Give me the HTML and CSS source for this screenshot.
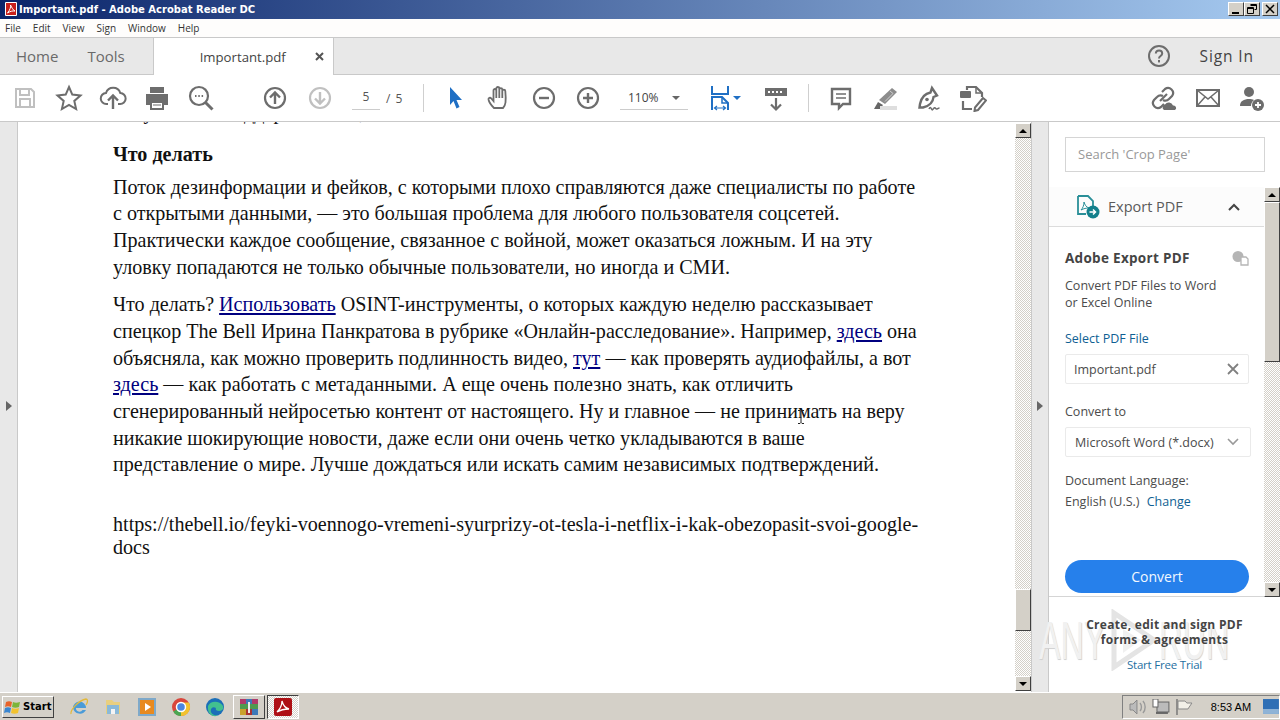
FILE: index.html
```html
<!DOCTYPE html>
<html lang="en">
<head>
    <meta charset="UTF-8">
    <title>Important.pdf - Adobe Acrobat Reader DC</title>
    <link rel="stylesheet" href="styles.css">
</head>
<body>
    <div class="titlebar">
        <svg class="title-icon" width="14" height="14" viewBox="0 0 14 14"><rect x="1" y="0" width="12" height="14" rx="1" fill="#fff"/><rect x="2" y="1" width="10" height="12" fill="#c8201c"/><path d="M3.5 11 C6 8 7 5 6.5 3 C8 6 9 8 11 9 C8.5 8.7 6 9.3 3.5 11Z" fill="none" stroke="#fff" stroke-width="1"/></svg>
        <span class="title-text">Important.pdf - Adobe Acrobat Reader DC</span>
        <div class="win-buttons">
            <button class="win-btn"><svg width="12" height="12" viewBox="0 0 12 12"><rect x="2" y="9" width="7" height="2" fill="#000"/></svg></button>
            <button class="win-btn"><svg width="12" height="12" viewBox="0 0 12 12"><path d="M4.5 1.5h6v5h-2M1.5 4.5h6v6h-6z M4.5 2.5h6 M1.5 5.5h6" fill="none" stroke="#000"/></svg></button>
            <button class="win-btn win-close"><svg width="12" height="12" viewBox="0 0 12 12"><path d="M2 2l8 8M10 2l-8 8" stroke="#000" stroke-width="1.5"/></svg></button>
        </div>
    </div>

    <div class="menubar">
        <span>File</span><span>Edit</span><span>View</span><span>Sign</span><span>Window</span><span>Help</span>
    </div>

    <div class="tabbar">
        <span class="nav-tab">Home</span>
        <span class="nav-tab nav-tools">Tools</span>
        <div class="doc-tab">
            <span>Important.pdf</span>
            <svg class="doc-close" width="9" height="9" viewBox="0 0 9 9"><path d="M1 1l7 7M8 1l-7 7" stroke="#555" stroke-width="2"/></svg>
        </div>
        <svg class="help-icon" width="24" height="24" viewBox="0 0 24 24"><circle cx="12" cy="12" r="10" fill="none" stroke="#6d6d6d" stroke-width="2"/><path d="M8.8 9.5c.2-4 6.4-4 6.4 0 0 2.6-3.2 2.5-3.2 5" fill="none" stroke="#6d6d6d" stroke-width="2"/><rect x="11" y="16" width="2" height="2.4" fill="#6d6d6d"/></svg>
        <span class="sign-in">Sign In</span>
    </div>

    <div class="toolbar">
        <svg class="tool tool-first" viewBox="0 0 28 28"><path d="M5 5h15l3 3v15H5z M9 5v6h9V5 M9 23v-8h10v8" fill="none" stroke="#c0c0c0" stroke-width="2"/></svg>
        <svg class="tool" viewBox="0 0 28 28"><path d="M14 3l3.3 7.6 8.2.8-6.200 5.500 1.800 8.100-7.100-4.200-7.100 4.200 1.800-8.100-6.200-5.500 8.200-.8z" fill="none" stroke="#6d6d6d" stroke-width="2"/></svg>
        <svg class="tool" viewBox="0 0 28 28"><path d="M9 20H7.500a5.500 5.500 0 0 1-.5-11 7.500 7.500 0 0 1 14.300 0 5.500 5.500 0 0 1-.3 11H19" fill="none" stroke="#6d6d6d" stroke-width="2"/><path d="M14 25V12M9 16.500l5-5 5 5" fill="none" stroke="#6d6d6d" stroke-width="2.400"/></svg>
        <svg class="tool" viewBox="0 0 28 28"><path d="M7 3h14v6H7z" fill="#6d6d6d"/><path d="M3 10h22v11h-4v-4H7v4H3z" fill="#6d6d6d"/><path d="M8 18h12v7H8z" fill="#fff" stroke="#6d6d6d" stroke-width="2"/><path d="M10 21h8" stroke="#6d6d6d"/></svg>
        <svg class="tool" viewBox="0 0 28 28"><circle cx="12" cy="12" r="9" fill="none" stroke="#6d6d6d" stroke-width="2.200"/><path d="M18.500 18.500l7 7" stroke="#6d6d6d" stroke-width="3"/><path d="M8 12h1.500M11.300 12h1.500M14.600 12h1.500" stroke="#6d6d6d" stroke-width="2"/></svg>

        <svg class="tool tool-nav" viewBox="0 0 28 28"><circle cx="14" cy="14" r="10" fill="none" stroke="#6d6d6d" stroke-width="2.200"/><path d="M14 20V9M9 13.500l5-5 5 5" fill="none" stroke="#6d6d6d" stroke-width="2.400"/></svg>
        <svg class="tool tool-down" viewBox="0 0 28 28"><circle cx="14" cy="14" r="10" fill="none" stroke="#c0c0c0" stroke-width="2.200"/><path d="M14 8v11M9 14.500l5 5 5-5" fill="none" stroke="#c0c0c0" stroke-width="2.400"/></svg>
        <span class="page-input">5</span>
        <span class="page-total">/ 5</span>
        <span class="tool-sep sep-one"></span>

        <svg class="tool tool-select" viewBox="0 0 28 28"><path d="M8 3l12 13h-5.500l3 7-3 1.500-3-7.500L8 21z" fill="#1f6fc4"/></svg>
        <svg class="tool" viewBox="0 0 28 28"><path d="M8 24c-2-2-5-6-5.500-8.500-.3-1.700 1.700-2.300 2.800-1L7.500 17V6.500c0-2 2.800-2 2.800 0V4.500c0-2 3-2 3 0v1c0-1.800 3-1.800 3 0v1.500c0-1.800 3-1.800 3 0 .5 5 .5 9 .2 11.500-.3 2.500-1.500 4.500-2.500 5.500z M10.300 6v8M13.300 5v9M16.300 6v8" fill="none" stroke="#6d6d6d" stroke-width="1.800"/></svg>
        <svg class="tool" viewBox="0 0 28 28"><circle cx="14" cy="14" r="10" fill="none" stroke="#6d6d6d" stroke-width="2.200"/><path d="M9 14h10" stroke="#6d6d6d" stroke-width="2.400"/></svg>
        <svg class="tool" viewBox="0 0 28 28"><circle cx="14" cy="14" r="10" fill="none" stroke="#6d6d6d" stroke-width="2.200"/><path d="M9 14h10M14 9v10" stroke="#6d6d6d" stroke-width="2.400"/></svg>

        <div class="zoom-select"><span>110%</span><i class="caret"></i></div>

        <svg class="tool tool-fit" viewBox="0 0 28 28"><path d="M5 2v8h16V2" fill="none" stroke="#1f6fc4" stroke-width="2"/><path d="M5 26V13h10l6 6v7" fill="none" stroke="#1f6fc4" stroke-width="2"/><path d="M15 13v6h6" fill="none" stroke="#1f6fc4" stroke-width="1.500"/><path d="M8 24h10M10 22l-2.500 2 2.500 2M16 22l2.500 2-2.500 2" fill="none" stroke="#1f6fc4" stroke-width="1.200"/></svg>
        <i class="caret caret-blue"></i>
        <svg class="tool tool-ruler" viewBox="0 0 28 28"><rect x="3" y="4" width="22" height="8" fill="#6d6d6d"/><path d="M6 8h2M10 8h2M14 8h2M18 8h2" stroke="#fff" stroke-width="2"/><path d="M14 14v11M9 20.500l5 5 5-5" fill="none" stroke="#6d6d6d" stroke-width="2.200"/></svg>
        <span class="tool-sep sep-two"></span>

        <svg class="tool tool-comment" viewBox="0 0 28 28"><path d="M5 5h18v15h-7l-4 4v-4H5z" fill="none" stroke="#6d6d6d" stroke-width="2.400"/><path d="M9 10h10M9 14h10" stroke="#6d6d6d" stroke-width="1.400"/></svg>
        <svg class="tool" viewBox="0 0 28 28"><path d="M21 4l5 4-12 12-6-4z" fill="#8c8c8c"/><path d="M19 7l3 2.500-8 8" fill="none" stroke="#d0d0d0"/><path d="M3 25l4-7 5 3-3 4z" fill="#666"/><rect x="9" y="22" width="17" height="4" fill="#dedede"/></svg>
        <svg class="tool" viewBox="0 0 28 28"><path d="M17 4l-1.500 4.500C10 9.500 6.500 13 5 20l-.5 3.500H8c6.500-1.500 10-5 10.500-10.500L22 11.500z" fill="none" stroke="#6d6d6d" stroke-width="2.400"/><circle cx="12" cy="15.500" r="1.800" fill="#6d6d6d"/><path d="M14 25c1-2 1.500-2 2.500 0s1.500 0 2.500-1 1.500 1 2.500 1 1.500-1 3-1" fill="none" stroke="#6d6d6d" stroke-width="1.600"/></svg>
        <svg class="tool" viewBox="0 0 28 28"><path d="M8 6V3h9l6 6v4M4 17v8h9" fill="none" stroke="#6d6d6d" stroke-width="2.200"/><rect x="1" y="7" width="11" height="7" rx="1" fill="#6d6d6d"/><path d="M17 3v6h6" fill="none" stroke="#6d6d6d" stroke-width="1.500"/><path d="M24 14l3 2.500-8 9.500-3.500 1 .5-3.500z" fill="none" stroke="#6d6d6d" stroke-width="2"/></svg>

        <svg class="tool tool-link" viewBox="0 0 28 28"><path d="M12 8l3-3a5 5 0 0 1 7 7l-3 3a5 5 0 0 1-6 1M14 20l-3 3a5 5 0 0 1-7-7l3-3a5 5 0 0 1 6-1" fill="none" stroke="#6d6d6d" stroke-width="2.200"/><path d="M10 17l7-7" stroke="#6d6d6d" stroke-width="2.200"/><path d="M14 26a3 3 0 0 1 1-5.500 4.500 4.500 0 0 1 8 1 2.500 2.500 0 0 1 2 4.500z" fill="#6d6d6d"/></svg>
        <svg class="tool" viewBox="0 0 28 28"><rect x="3" y="6" width="22" height="16" fill="none" stroke="#6d6d6d" stroke-width="2"/><path d="M3 6l11 9 11-9M3 22l8-9M25 22l-8-9" fill="none" stroke="#6d6d6d" stroke-width="1.500"/></svg>
        <svg class="tool" viewBox="0 0 28 28"><circle cx="11" cy="8" r="5" fill="#6d6d6d"/><path d="M2 22c0-5 4-7 9-7 2 0 3.500.300 5 1-2 1.500-3 3.500-3 6z" fill="#6d6d6d"/><circle cx="20" cy="21" r="6" fill="#6d6d6d"/><path d="M17 21h6M20 18v6" stroke="#fff" stroke-width="1.800"/></svg>
    </div>

    <div class="workspace">
        <div class="left-strip"><i class="arrow-right"></i></div>

        <div class="document">
            <div class="doc-body">
                <p class="cut-line">получили от поддержки чата,</p>
                <h3 class="doc-heading">Что делать</h3>
                <p class="doc-para">Поток дезинформации и фейков, с которыми плохо справляются даже специалисты по работе<br>
                с открытыми данными, — это большая проблема для любого пользователя соцсетей.<br>
                Практически каждое сообщение, связанное с войной, может оказаться ложным. И на эту<br>
                уловку попадаются не только обычные пользователи, но иногда и СМИ.</p>
                <p class="doc-para">Что делать? <a href="#">Использовать</a> OSINT-инструменты, о которых каждую неделю рассказывает<br>
                спецкор The Bell Ирина Панкратова в рубрике «Онлайн-расследование». Например, <a href="#">здесь</a> она<br>
                объясняла, как можно проверить подлинность видео, <a href="#">тут</a> — как проверять аудиофайлы, а вот<br>
                <a href="#">здесь</a> — как работать с метаданными. А еще очень полезно знать, как отличить<br>
                сгенерированный нейросетью контент от настоящего. Ну и главное — не принимать на веру<br>
                никакие шокирующие новости, даже если они очень четко укладываются в ваше<br>
                представление о мире. Лучше дождаться или искать самим независимых подтверждений.</p>
                <p class="doc-url">https://thebell.io/feyki-voennogo-vremeni-syurprizy-ot-tesla-i-netflix-i-kak-obezopasit-svoi-google-<br>docs</p>
            </div>
            <svg class="text-cursor" width="8" height="14" viewBox="0 0 8 14"><path d="M1 .5h2l1 1 1-1h2M4 1.500v11M1 13.500h2l1-1 1 1h2" fill="none" stroke="#222"/></svg>
        </div>

        <div class="scrollbar doc-scroll">
            <button class="scroll-btn"><i class="tri-up"></i></button>
            <div class="scroll-track doc-track"><div class="scroll-thumb doc-thumb"></div></div>
            <button class="scroll-btn"><i class="tri-down"></i></button>
        </div>

        <div class="right-strip"><i class="arrow-right"></i></div>

        <aside class="side">
            <div class="search-box">Search 'Crop Page'</div>
            <div class="side-middle">
                <div class="export-col">
                    <div class="export-head">
                        <svg width="24" height="24" viewBox="0 0 24 24"><path d="M2 1h10l5 5v5M2 1v18h8" fill="none" stroke="#2a8f98" stroke-width="1.800"/><path d="M5 15c2-2 3-5 3-8 1 3 2 5 5 6-3 0-5 .5-8 2z" fill="none" stroke="#2a8f98"/><circle cx="17" cy="17" r="6.500" fill="#13808c"/><path d="M13.500 17h6M17 14.500l2.500 2.500-2.500 2.500" fill="none" stroke="#fff" stroke-width="1.500"/></svg>
                        <span class="export-title">Export PDF</span>
                        <svg class="chevron-up" width="12" height="8" viewBox="0 0 12 8"><path d="M1 7l5-5 5 5" fill="none" stroke="#444" stroke-width="2"/></svg>
                    </div>
                    <div class="export-body">
                        <div class="export-name">
                            <strong>Adobe Export PDF</strong>
                            <svg width="17" height="16" viewBox="0 0 17 16"><circle cx="6" cy="6.500" r="5.500" fill="#b5b5b5"/><path d="M9 7h5l2 2v6H9z" fill="#fff" stroke="#b5b5b5" stroke-width="1.300"/></svg>
                        </div>
                        <p class="export-desc">Convert PDF Files to Word<br>or Excel Online</p>
                        <a class="side-link select-link" href="#">Select PDF File</a>
                        <div class="field file-field">
                            <span>Important.pdf</span>
                            <svg width="12" height="12" viewBox="0 0 12 12"><path d="M1 1l10 10M11 1L1 11" stroke="#808080" stroke-width="1.800"/></svg>
                        </div>
                        <p class="convert-label">Convert to</p>
                        <div class="field format-field">
                            <span>Microsoft Word (*.docx)</span>
                            <svg width="12" height="8" viewBox="0 0 12 8"><path d="M1 1l5 5 5-5" fill="none" stroke="#999" stroke-width="1.600"/></svg>
                        </div>
                        <p class="lang-label">Document Language:</p>
                        <p class="lang-value">English (U.S.) <a class="side-link change-link" href="#">Change</a></p>
                        <button class="convert-btn">Convert</button>
                    </div>
                </div>
                <div class="scrollbar side-scroll">
                    <button class="scroll-btn"><i class="tri-up"></i></button>
                    <div class="scroll-track side-track"><div class="scroll-thumb side-thumb"></div></div>
                    <button class="scroll-btn"><i class="tri-down"></i></button>
                </div>
            </div>
            <div class="promo">
                <p class="promo-text">Create, edit and sign PDF<br>forms &amp; agreements</p>
                <a class="promo-link" href="#">Start Free Trial</a>
            </div>
        </aside>

        <div class="watermark">
            <span class="wm-word">ANY</span>
            <svg width="50" height="62" viewBox="0 0 50 62"><path d="M5 4l40 27L5 58z" fill="none" stroke="#e4e4e4" stroke-width="5"/><path d="M14 20l18 11-18 13z" fill="#f0f0f0"/></svg>
            <span class="wm-word">RUN</span>
        </div>
    </div>

    <div class="taskbar">
        <button class="start-btn">
            <svg width="18" height="16" viewBox="0 0 18 16"><path d="M2 3c2-1 4-1 6 0L7 8C5 7 3 7 1 8z" fill="#e8632a"/><path d="M9 3c2 1 4 1 7 0l-1 5c-2 1-5 1-7 0z" fill="#7cb53a"/><path d="M1 9c2-1 4-1 6 0l-1 5c-2-1-4-1-6 0z" fill="#3a86d0"/><path d="M8 9c2 1 5 1 7 0l-1 5c-2 1-5 1-7 0z" fill="#f2c22e"/></svg>
            <span>Start</span>
        </button>
        <div class="quick">
            <svg width="20" height="20" viewBox="0 0 20 20"><path d="M4 11a6.500 6.500 0 0 1 13 0H7a3.500 3.500 0 0 0 6.500 2H17a7 7 0 0 1-13-2z" fill="#4a9bd8"/><path d="M2 17C1 13 10 3 17 2c2 0 2 3 0 6" fill="none" stroke="#e3b93a" stroke-width="1.300"/></svg>
            <svg width="20" height="20" viewBox="0 0 20 20"><path d="M3 3h6l2 2h6v12H3z" fill="#e9cf7e"/><rect x="4" y="8" width="12" height="9" fill="#8ab9d8"/><rect x="8" y="12" width="4" height="5" fill="#f4f4f4"/></svg>
            <svg width="20" height="20" viewBox="0 0 20 20"><rect x="2" y="2" width="16" height="16" fill="#e88a1f" stroke="#7fa9c9" stroke-width="2"/><path d="M8 6l6 4-6 4z" fill="#fff"/></svg>
            <svg width="20" height="20" viewBox="0 0 20 20"><circle cx="10" cy="10" r="9" fill="#d9473c"/><path d="M10 10L2.200 14.500A9 9 0 0 0 10 19z" fill="#4aa652"/><path d="M10 10v9a9 9 0 0 0 7.800-13.500H10z" fill="#f2c22e"/><circle cx="10" cy="10" r="4.500" fill="#4a86e0" stroke="#fff" stroke-width="1.500"/></svg>
            <svg width="20" height="20" viewBox="0 0 20 20"><circle cx="10" cy="10" r="9" fill="#1b6fb8"/><path d="M3 9c2-5 11-6 15 0 1 3-1 5-4 5-2 0-4-1-3-3-3-2-6 0-5 4 1 3 5 4 8 3-5 3-12 0-11-9z" fill="#42c08f"/></svg>
            <div class="task-app"><svg width="20" height="20" viewBox="0 0 20 20"><rect x="1" y="2" width="6" height="5" fill="#b03a6a"/><rect x="7" y="2" width="6" height="5" fill="#3e79b8"/><rect x="13" y="2" width="6" height="5" fill="#b03a6a"/><rect x="1" y="7" width="18" height="5" fill="#4f9a4f"/><rect x="1" y="12" width="6" height="6" fill="#c9a12c"/><rect x="7" y="12" width="6" height="6" fill="#a33"/><rect x="13" y="12" width="6" height="6" fill="#3e79b8"/><rect x="9" y="5" width="2" height="11" fill="#eee"/></svg></div>
            <div class="task-app task-active"><svg width="20" height="20" viewBox="0 0 20 20"><rect x="1" y="1" width="18" height="18" rx="2" fill="#ae1015"/><path d="M4 15c3-3 5-7 5-11 1 4 3 7 7 8-4 0-8 .6-12 3z" fill="none" stroke="#fff" stroke-width="1.300"/></svg></div>
        </div>
        <div class="tray">
            <svg width="18" height="16" viewBox="0 0 18 16"><path d="M1 5h3l4-4v14l-4-4H1z" fill="#bbb" stroke="#888"/><path d="M11 4c2 2 2 6 0 8M14 2c3 3 3 9 0 12" fill="none" stroke="#999" stroke-width="1.400"/></svg>
            <svg width="18" height="16" viewBox="0 0 18 16"><rect x="5" y="3" width="12" height="10" fill="#bbb" stroke="#666"/><rect x="1" y="0" width="5" height="8" fill="#fff" stroke="#666"/><path d="M4 14h12" stroke="#666" stroke-width="2"/></svg>
            <svg width="18" height="16" viewBox="0 0 18 16"><path d="M2 0v16" stroke="#777" stroke-width="1.500"/><path d="M3 2h7l2 2h5l-4 6H3z" fill="#f2f0e8" stroke="#888"/></svg>
            <span class="clock">8:53 AM</span>
            <svg class="show-desktop" width="16" height="15" viewBox="0 0 16 15"><rect width="16" height="15" fill="#2f6fb5"/><rect y="10" width="16" height="5" fill="#8fb3d6"/></svg>
        </div>
    </div>
</body>
</html>
```

FILE: styles.css
```css
* {
    box-sizing: border-box;
}

html, body {
    margin: 0;
    padding: 0;
    width: 1280px;
    height: 720px;
    overflow: hidden;
}

body {
    display: flex;
    flex-direction: column;
    background-color: #fff;
    font-family: "Open Sans", sans-serif;
}

p, h3 {
    margin: 0;
}

button {
    font-family: inherit;
    padding: 0;
}

/* title bar */
.titlebar {
    height: 19px;
    display: flex;
    align-items: center;
    padding: 0 2px 1px 4px;
    background: linear-gradient(to right, #0a246a, #a6caf0);
}

.title-icon {
    margin-right: 1px;
}

.title-text {
    color: #fff;
    font-family: "DejaVu Sans", sans-serif;
    font-weight: bold;
    font-size: 10px;
}

.win-buttons {
    margin-left: auto;
    display: flex;
}

.win-btn {
    width: 16px;
    height: 14px;
    display: flex;
    align-items: center;
    justify-content: center;
    background-color: #d4d0c8;
    border: 1px solid;
    border-color: #fff #404040 #404040 #fff;
}

.win-close {
    margin-left: 2px;
}

/* menu */
.menubar {
    height: 19px;
    display: flex;
    align-items: center;
    gap: 12px;
    padding-left: 5px;
    background-color: #fefdfc;
    border-bottom: 1px solid #c9c9c9;
    font-family: "Open Sans", sans-serif;
    font-size: 10px;
    color: #333;
}

/* tabs */
.tabbar {
    height: 37px;
    display: flex;
    align-items: center;
    background-color: #e8e8e8;
    border-bottom: 1px solid #c9c9c9;
    color: #6a6a6a;
}

.nav-tab {
    font-size: 15px;
    margin-left: 16px;
}

.nav-tools {
    margin-left: 29px;
}

.doc-tab {
    width: 181px;
    height: 37px;
    margin-left: 28px;
    margin-bottom: -1px;
    padding-left: 46px;
    display: flex;
    align-items: center;
    background-color: #fff;
    border-right: 1px solid #c9c9c9;
    border-left: 1px solid #c9c9c9;
    font-size: 13.200px;
    color: #444;
}

.doc-close {
    margin-left: 29px;
}

.help-icon {
    margin-left: auto;
}

.sign-in {
    margin: 0 26px 0 29px;
    font-size: 15.500px;
    letter-spacing: 0.9px;
    color: #444;
}

/* toolbar */
.toolbar {
    height: 47px;
    display: flex;
    align-items: center;
    gap: 16px;
    padding-left: 11px;
    background-color: #fff;
    border-bottom: 1px solid #c9c9c9;
}

.tool {
    width: 28px;
    height: 28px;
    flex: none;
}

.tool-nav {
    margin-left: 30px;
}

.tool-down {
    margin-left: 1px;
}

.page-input {
    width: 28px;
    height: 24px;
    margin-left: 2px;
    line-height: 22px;
    text-align: center;
    border-bottom: 1px solid #ccc;
    font-size: 12px;
    color: #555;
}

.page-total {
    margin-left: -10px;
    width: 20px;
    font-size: 12px;
    letter-spacing: 1px;
    white-space: nowrap;
    color: #555;
}

.tool-sep {
    width: 1px;
    height: 28px;
    background-color: #cfcfcf;
    flex: none;
}

.sep-one {
    margin-left: 1px;
}

.sep-two {
    margin-left: 2px;
}

.tool-select {
    margin-left: 2px;
}

.zoom-select {
    width: 68px;
    height: 24px;
    margin-left: 2px;
    padding: 0 8px;
    display: flex;
    align-items: center;
    justify-content: space-between;
    border-bottom: 1px solid #ccc;
    font-size: 12px;
    color: #444;
}

.caret {
    width: 0;
    height: 0;
    border-style: solid;
    border-width: 4px 4px 0;
    border-color: #666 transparent transparent;
}

.caret-blue {
    margin-left: -18px;
    border-color: #1f6fc4 transparent transparent;
}

.tool-fit {
    margin-left: 3px;
}

.tool-ruler {
    margin-left: 5px;
}

.tool-comment {
    margin-left: 2px;
}

.tool-link {
    margin-left: 147px;
}

/* main area */
.workspace {
    position: relative;
    flex: 1;
    min-height: 0;
    display: flex;
}

.left-strip, .right-strip {
    width: 18px;
    display: flex;
    align-items: center;
    justify-content: center;
    background-color: #e8e8e8;
    border-right: 1px solid #c9c9c9;
}

.left-strip {
    padding-bottom: 2px;
}

.right-strip {
    padding-bottom: 2px;
    border-left: 1px solid #c9c9c9;
}

.arrow-right {
    width: 0;
    height: 0;
    border-style: solid;
    border-width: 5px 0 5px 6px;
    border-color: transparent transparent transparent #666;
}

.document {
    position: relative;
    width: 997px;
    overflow: hidden;
    background-color: #fff;
}

.doc-body {
    padding-left: 95px;
    font-family: "Liberation Serif", serif;
    font-size: 20.100px;
    line-height: 26.670px;
    color: #111;
}

.cut-line {
    margin-top: -23px;
    height: 22px;
}

.doc-heading {
    margin-top: 19.500px;
    font-size: 20.100px;
    line-height: 26px;
}

.doc-para {
    margin-top: 7px;
    margin-bottom: 11px;
}

.doc-para a {
    color: #000080;
}

.doc-url {
    margin-top: 35px;
    line-height: 23px;
}

.text-cursor {
    position: absolute;
    left: 779px;
    top: 288px;
}

/* scrollbars */
.scrollbar {
    width: 16px;
    display: flex;
    flex-direction: column;
    flex: none;
}

.scroll-btn {
    height: 15px;
    flex: none;
    display: flex;
    align-items: center;
    justify-content: center;
    background-color: #d4d0c8;
    border: 1px solid;
    border-color: #fff #404040 #404040 #fff;
}

.scroll-track {
    flex: 1;
    display: flex;
    flex-direction: column;
    background: repeating-conic-gradient(#d4d0c8 0 25%, #fff 0 50%) 0 0 / 2px 2px;
}

.scroll-thumb {
    background-color: #d4d0c8;
    border: 1px solid;
    border-color: #fff #404040 #404040 #fff;
}

.doc-thumb {
    height: 42px;
    margin-top: 451px;
}

.side-thumb {
    height: 160px;
}

.tri-up, .tri-down {
    width: 0;
    height: 0;
    border-style: solid;
}

.tri-up {
    border-width: 0 4px 4px;
    border-color: transparent transparent #000;
}

.tri-down {
    border-width: 4px 4px 0;
    border-color: #000 transparent transparent;
}

.doc-scroll {
    padding-top: 1px;
    padding-bottom: 1px;
}

/* right panel */
.side {
    position: relative;
    width: 231px;
    display: flex;
    flex-direction: column;
    background-color: #fff;
    color: #4b4b4b;
}

.search-box {
    width: 200px;
    height: 35px;
    margin: 15px 0 15px 16px;
    padding-left: 12px;
    line-height: 33px;
    border: 1px solid #d5d5d5;
    font-size: 13px;
    color: #999;
}

.side-middle {
    height: 410px;
    display: flex;
    justify-content: space-between;
}

.export-col {
    width: 215px;
    border-bottom: 1px solid #d5d5d5;
}

.export-head {
    height: 40px;
    padding-left: 27px;
    display: flex;
    align-items: center;
    border-bottom: 1px solid #dcdcdc;
    background-color: #fcfcfc;
}

.export-title {
    margin-left: 8px;
    font-size: 14.500px;
    color: #5a5a5a;
}

.chevron-up {
    margin-left: 45px;
}

.export-body {
    padding: 0 15px 0 16px;
    font-size: 12.500px;
}

.export-name {
    margin-top: 22px;
    display: flex;
    align-items: center;
    justify-content: space-between;
}

.export-name strong {
    font-size: 13.500px;
    letter-spacing: 0.3px;
    color: #444;
}

.export-desc {
    margin-top: 10px;
    line-height: 17px;
}

.side-link {
    color: #0f5f94;
    text-decoration: none;
}

.select-link {
    display: block;
    margin-top: 19px;
}

.field {
    height: 30px;
    display: flex;
    align-items: center;
    justify-content: space-between;
    padding: 0 9px 0 8px;
    background-color: #fff;
    border: 1px solid #eaeaea;
    border-radius: 2px;
    font-size: 12.500px;
}

.file-field {
    margin-top: 7px;
}

.convert-label {
    margin-top: 19px;
}

.format-field {
    margin-top: 7px;
    margin-right: -2px;
    padding-left: 9px;
    padding-right: 11px;
}

.lang-label {
    margin-top: 15px;
}

.lang-value {
    margin-top: 4px;
    line-height: 17px;
}

.change-link {
    margin-left: 4px;
}

.convert-btn {
    display: block;
    width: 184px;
    height: 33px;
    margin-top: 50px;
    border: none;
    border-radius: 17px;
    background-color: #2680eb;
    color: #f2f8ff;
    font-size: 14px;
}

.promo {
    position: relative;
    z-index: 2;
    text-align: center;
    padding: 20px 0 0 0;
}

.promo-text {
    font-size: 12px;
    line-height: 15px;
    font-weight: 700;
    letter-spacing: 0.3px;
    color: #444;
    text-shadow: 0 0 2px #fff;
}

.promo-link {
    display: block;
    margin-top: 10px;
    font-size: 11.500px;
    letter-spacing: -0.2px;
    color: #1f6f9f;
    text-decoration: none;
    text-shadow: 0 0 2px #fff;
}

/* watermark sits over the strip and the panel */
.watermark {
    position: absolute;
    left: 1039px;
    top: 487px;
    z-index: 1;
    display: flex;
    align-items: center;
    font-family: "Liberation Sans", sans-serif;
    font-size: 54px;
    color: #f1f1f1;
    text-shadow: 1px 1px 1px #d0d0d0;
    pointer-events: none;
}

.wm-word {
    width: 70px;
    transform: scaleX(0.6);
    transform-origin: left center;
}

/* taskbar */
.taskbar {
    height: 28px;
    display: flex;
    align-items: center;
    background-color: #d4d0c8;
    border-top: 1px solid #fff;
    box-shadow: inset 0 1px 0 #d4d0c8;
}

.start-btn {
    width: 52px;
    height: 22px;
    margin-left: 2px;
    display: flex;
    align-items: center;
    gap: 1px;
    padding-left: 1px;
    background-color: #d4d0c8;
    border: 1px solid;
    border-color: #fff #404040 #404040 #fff;
    font-family: "DejaVu Sans", sans-serif;
    font-weight: bold;
    font-size: 10px;
    color: #000;
}

.quick {
    display: flex;
    align-items: center;
    gap: 14px;
    margin-left: 15px;
}

.task-app {
    width: 32px;
    height: 24px;
    margin: 0 -6px;
    display: flex;
    align-items: center;
    justify-content: center;
    border: 1px solid;
    border-color: #fff #404040 #404040 #fff;
}

.task-active {
    background: repeating-conic-gradient(#d4d0c8 0 25%, #fff 0 50%) 0 0 / 2px 2px;
    border-color: #404040 #fff #fff #404040;
}

.tray {
    margin-left: auto;
    width: 158px;
    height: 24px;
    display: flex;
    align-items: center;
    gap: 5px;
    padding-left: 6px;
    border: 1px solid;
    border-color: #808080 #fff #fff #808080;
}

.clock {
    margin-left: 13px;
    white-space: nowrap;
    font-family: "Liberation Sans", sans-serif;
    font-size: 11px;
    color: #000;
}

.show-desktop {
    margin-left: 7px;
}
```
